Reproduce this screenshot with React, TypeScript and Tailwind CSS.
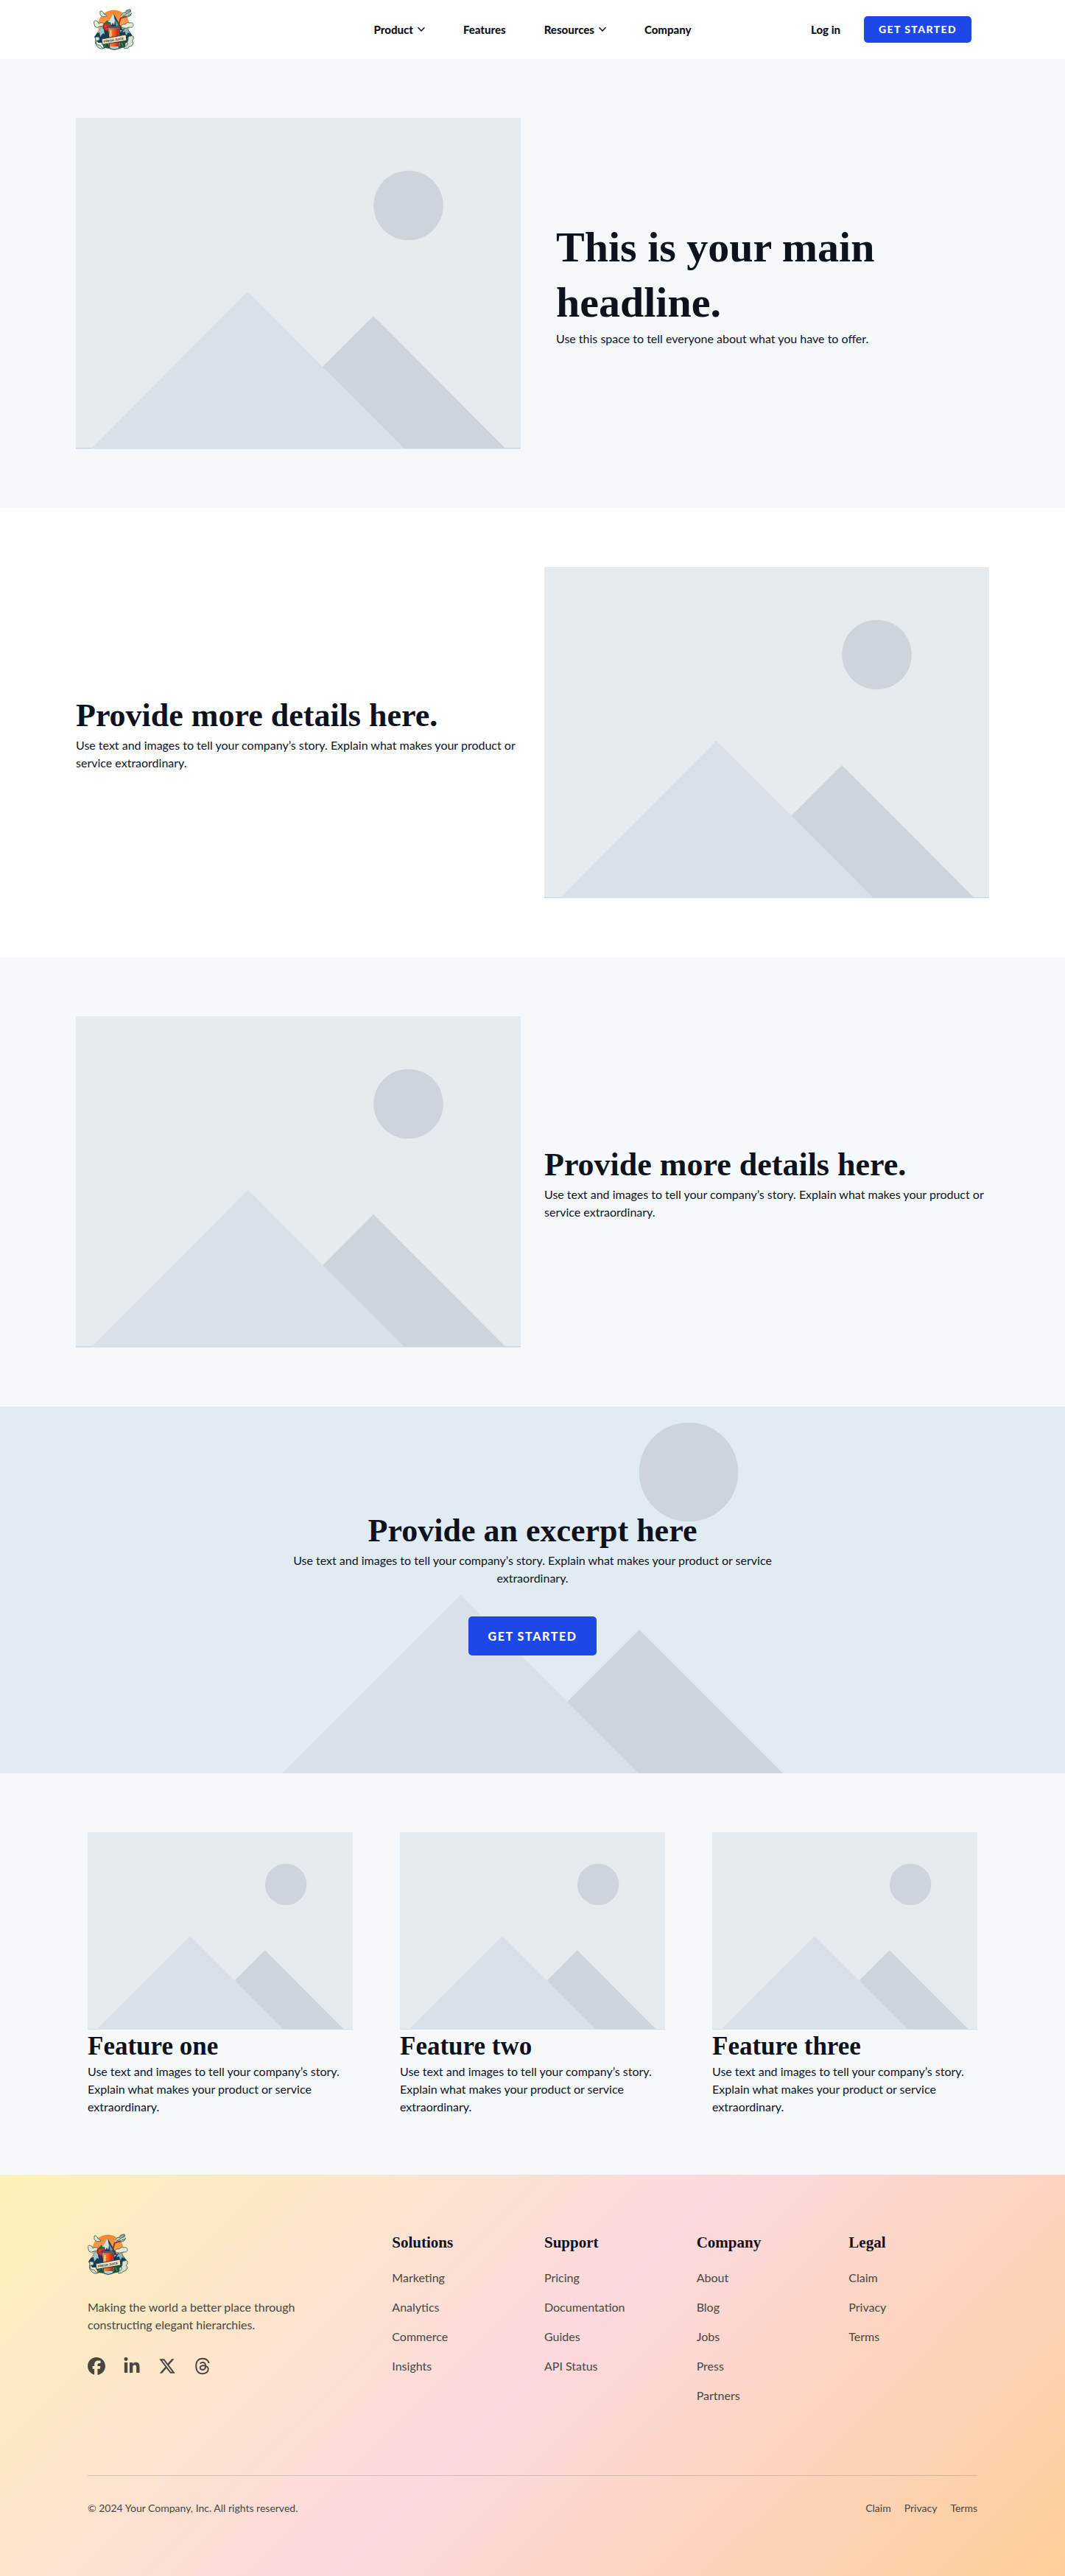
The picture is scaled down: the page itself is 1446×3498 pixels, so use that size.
import { FaFacebook, FaLinkedinIn, FaXTwitter, FaThreads } from "react-icons/fa6";

const SERIF = "font-['Liberation_Serif',serif] font-bold";
const STORY = "Use text and images to tell your company’s story. Explain what makes your product or service extraordinary.";

function Logo() {
  return (
    <svg viewBox="0 0 56 56" className="block size-14" role="img" aria-label="Fresh Juice">
      <defs>
        <linearGradient id="sun" x1="0" y1="0" x2="0" y2="1">
          <stop offset="0" stopColor="#ff8328" />
          <stop offset="0.7" stopColor="#ffae62" />
        </linearGradient>
        <linearGradient id="juice" x1="0" y1="0" x2="1" y2="0">
          <stop offset="0" stopColor="#ff8a35" />
          <stop offset="0.5" stopColor="#fb5a1c" />
          <stop offset="0.75" stopColor="#d63a1a" />
          <stop offset="1" stopColor="#9f1e1e" />
        </linearGradient>
      </defs>
      <circle cx="27.500" cy="23" r="21.500" fill="url(#sun)" />
      {/* mountains */}
      <path d="M27 6 L14 29 H40 Z" fill="#1a4459" />
      <path d="M27 6 L19 20 L23 18 L23 24 L26 19 L28 22 L29 16 Z" fill="#cfe3dc" />
      <path d="M29 14 L35 23 L31 27 Z" fill="#5e9aa6" />
      <path d="M11 24 L1 38 L6 46 H22 V33 Z" fill="#173c52" />
      <path d="M11 24 L5 33 L8 32 L9 38 L13 33 L15 35 L14 28 Z" fill="#9cc6cb" />
      <path d="M44 24 L34 34 L35 46 H50 L54 38 Z" fill="#173c52" />
      <path d="M44 24 L39 32 L43 31 L44 37 L47 32 L50 34 Z" fill="#86b8c1" />
      {/* clouds */}
      <g fill="#e8ecd0" stroke="#29525d" strokeWidth="0.8">
        <path d="M9 5 Q8 2 11 3 Q14 5 14 7 Q18 8 18 10 Q13 12 10 9 Q8 7 9 5 Z" />
        <path d="M1 21 Q-1 16 3 16 Q7 17 7 20 Q11 17 15 21 Q13 24 8 24 Q4 27 2 24 Z" />
        <path d="M37 24 Q38 20 43 21 Q46 17 49 19 Q54 18 54 22 Q54 26 48 25 Q42 28 37 24 Z" />
      </g>
      {/* steam above the straw */}
      <path d="M37 9 Q38 4 42 5 Q42 1 47 1 Q51 0 52 1 Q48 3 51 4 Q54 6 51 9 Q47 13 42 10 Q39 9 37 12 Z" fill="#c5cfbf" />
      <path d="M37 9 Q40 4 44 5 Q44 1 50 1 M39 10 Q44 9 45 6 Q48 6 51 3 M42 11 Q48 12 51 8 M46 9 Q50 9 52 6 M45 3 Q48 4 51 2" fill="none" stroke="#2f525a" strokeWidth="0.9" />
      <path d="M33.500 25 L36.500 13 L45 10" fill="none" stroke="#8f3028" strokeWidth="1.800" />
      {/* strawberry */}
      <path d="M13 22 Q17 16 23 20 Q25 27 19 31 Q13 29 13 22 Z" fill="#cf2c2a" stroke="#4b1c26" strokeWidth="0.8" />
      <path d="M14 20 L17 17 L19 15 L20 18 L24 19 L19 21 Z" fill="#2d6b3a" />
      <path d="M16 23.500 h1 M20 24 h1 M18 27 h1" stroke="#ffd7b0" strokeWidth="0.8" />
      {/* leaves */}
      <path d="M11 46 L18 38 L22 54 L14 53 Z M36 42 L44 43 L43 52 L35 54 Z" fill="#1f5432" />
      <path d="M14 52 L18 46 M40 51 L38 46" stroke="#6d9a45" strokeWidth="1" />
      {/* foam scrolls */}
      <g fill="#d9e2c8" stroke="#335a60" strokeWidth="0.9">
        <path d="M3 41 Q1 38 5 38 Q9 38 8 42 Q6 44 4 43 Q2 48 6 49 Q9 48 10 51 Q12 54 15 53 Q10 56 6 52 Q1 48 3 41 Z" />
        <path d="M47 42 Q46 37 50 37 Q55 35 54 41 Q51 43 54 46 Q53 51 49 51 Q47 54 42 54 Q40 53 43 51 Q46 50 46 48 Q45 45 47 42 Z" />
      </g>
      {/* glass */}
      <path d="M19.500 24 H36 L34.500 54 Q28 57 22 54 Z" fill="#a9d0d6" stroke="#17333f" strokeWidth="1" />
      <path d="M20.500 26.500 H35 L33.800 51 H22.500 Z" fill="url(#juice)" />
      <path d="M23.500 29 V38" stroke="#ffe6bd" strokeWidth="1.500" />
      <path d="M20 24.500 H35.500 V26.500 H20.500 Z" fill="#5b4a48" />
      {/* banner */}
      <path d="M11 41 L44 35 L45 43 L12 48.500 Z" fill="#efe3c0" stroke="#243c42" strokeWidth="1" />
      <text x="14" y="46" transform="rotate(-9 14 46)" fontSize="4.200" fontWeight="700" fill="#1c3138" fontFamily="Liberation Sans, sans-serif">FRESH JUICE</text>
    </svg>
  );
}

function Chevron() {
  return (
    <svg viewBox="0 0 10 6" className="h-[6px] w-[10px]" fill="none" stroke="currentColor" strokeWidth="1.500" strokeLinecap="round" strokeLinejoin="round" aria-hidden="true">
      <path d="M1 0.700 L5 5 L9 0.700" />
    </svg>
  );
}

function Placeholder() {
  return (
    <svg viewBox="0 0 604 450" className="block h-auto w-full" role="img" aria-label="Placeholder image">
      <rect width="604" height="449" fill="#e5ebee" />
      <rect y="448" width="604" height="1.500" fill="#cfd5df" />
      <circle cx="451.500" cy="119" r="47.300" fill="#cdd4dc" />
      <path d="M404 269 L583 448.500 H225 Z" fill="#cdd4dc" />
      <path d="M233.500 236 L446.500 449.300 H21 Z" fill="#d9e0e8" />
    </svg>
  );
}

function Details({ reverse, tinted }: { reverse?: boolean; tinted?: boolean }) {
  return (
    <section className={tinted ? "bg-[#f5f9fc] py-20" : "bg-white py-20"}>
      <div className="mx-auto grid max-w-[1240px] grid-cols-2 items-center gap-8">
        <div className={reverse ? "order-2" : ""}><Placeholder /></div>
        <div>
          <h2 className={`${SERIF} text-[44px] leading-[57px]`}>Provide more details here.</h2>
          <p>{STORY}</p>
        </div>
      </div>
    </section>
  );
}

const columns = [
  { title: "Solutions", links: ["Marketing", "Analytics", "Commerce", "Insights"] },
  { title: "Support", links: ["Pricing", "Documentation", "Guides", "API Status"] },
  { title: "Company", links: ["About", "Blog", "Jobs", "Press", "Partners"] },
  { title: "Legal", links: ["Claim", "Privacy", "Terms"] },
];

const socials = [
  { label: "Facebook", Icon: FaFacebook },
  { label: "LinkedIn", Icon: FaLinkedinIn },
  { label: "X", Icon: FaXTwitter },
  { label: "Threads", Icon: FaThreads },
];

export default function App() {
  return (
    <div className="bg-[#f5f9fc] font-[Lato,sans-serif] text-base leading-6 text-[#0e121d]">
      <header className="bg-white">
        <div className="mx-auto grid h-20 max-w-[1240px] grid-cols-[1fr_auto_1fr] items-center px-6 text-[15px] font-black">
          <a href="#" className="justify-self-start"><Logo /></a>
          <nav className="flex items-center gap-[52px]">
            <button className="flex items-center gap-1.5">Product <Chevron /></button>
            <a href="#">Features</a>
            <button className="flex items-center gap-1.5">Resources <Chevron /></button>
            <a href="#">Company</a>
          </nav>
          <div className="flex items-center gap-8 justify-self-end">
            <a href="#">Log in</a>
            <a href="#" className="flex h-9 items-center rounded-[5px] bg-[#1d47e6] px-5 text-sm tracking-widest text-white">GET STARTED</a>
          </div>
        </div>
      </header>

      <main>
        <section className="py-20">
          <div className="mx-auto grid max-w-[1240px] grid-cols-2 items-center gap-8">
            <Placeholder />
            <div className="px-4">
              <h1 className={`${SERIF} text-[58px] leading-[75px]`}>This is your main headline.</h1>
              <p>Use this space to tell everyone about what you have to offer.</p>
            </div>
          </div>
        </section>

        <Details reverse />
        <Details tinted />

        <section className="relative bg-[#e1ecf2] pt-35 pb-40">
          <svg viewBox="0 0 860 498" preserveAspectRatio="xMidYMid meet" className="absolute inset-0 size-full" aria-hidden="true">
            <circle cx="642" cy="89" r="67.300" fill="#cdd4dc" />
            <path d="M575 303 L770 498 H380 Z" fill="#cdd4dc" />
            <path d="M332 256 L574 498 H90 Z" fill="#d9e0e8" />
          </svg>
          <div className="relative mx-auto flex max-w-[672px] flex-col items-center text-center">
            <h2 className={`${SERIF} text-[44px] leading-[57px]`}>Provide an excerpt here</h2>
            <p>{STORY}</p>
            <a href="#" className="mt-10 flex h-[53px] items-center rounded-[5px] bg-[#1d47e6] px-[26px] font-black tracking-widest text-white">GET STARTED</a>
          </div>
        </section>

        <section className="py-20">
          <div className="mx-auto grid max-w-[1240px] grid-cols-3 gap-16 px-4">
            {["one", "two", "three"].map((n) => (
              <article key={n}>
                <Placeholder />
                <h3 className={`${SERIF} text-[35px] leading-[45px]`}>Feature {n}</h3>
                <p>{STORY}</p>
              </article>
            ))}
          </div>
        </section>
      </main>

      <footer className="bg-[linear-gradient(135deg,#fdf2b8_0%,#fcd9de_50%,#fdce98_100%)] py-20 text-[#4a4740]">
        <div className="mx-auto max-w-[1240px] px-4">
          <div className="grid grid-cols-3 gap-8">
            <div>
              <Logo />
              <p className="mt-8 max-w-[320px]">Making the world a better place through constructing elegant hierarchies.</p>
              <div className="mt-8 flex gap-6">
                {socials.map(({ label, Icon }) => (
                  <a key={label} href="#" aria-label={label}><Icon className="size-6" /></a>
                ))}
              </div>
            </div>
            <div className="col-span-2 grid grid-cols-4 gap-8">
              {columns.map((c) => (
                <nav key={c.title} aria-label={c.title}>
                  <h3 className={`${SERIF} text-[21px] leading-6 text-[#0e121d]`}>{c.title}</h3>
                  <ul className="mt-6 space-y-4">
                    {c.links.map((l) => (
                      <li key={l}><a href="#">{l}</a></li>
                    ))}
                  </ul>
                </nav>
              ))}
            </div>
          </div>
          <div className="mt-24 flex justify-between border-t border-[#4a4740]/20 pt-8 text-sm leading-6">
            <p>© 2024 Your Company, Inc. All rights reserved.</p>
            <nav aria-label="Legal links" className="flex gap-[18px]">
              <a href="#">Claim</a>
              <a href="#">Privacy</a>
              <a href="#">Terms</a>
            </nav>
          </div>
        </div>
      </footer>
    </div>
  );
}
